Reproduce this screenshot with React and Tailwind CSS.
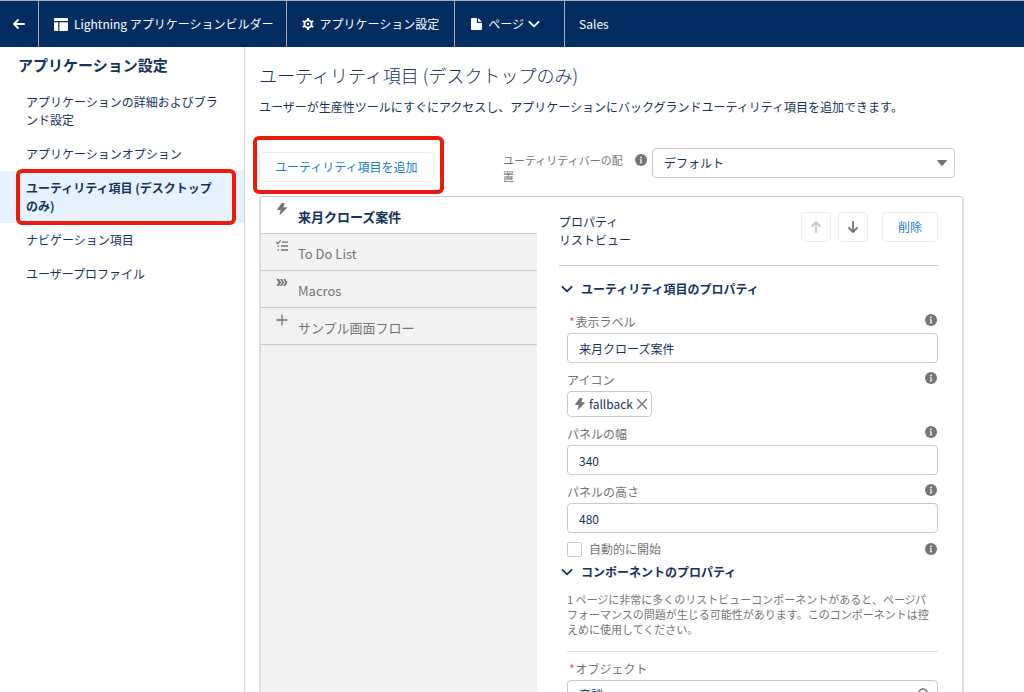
import { useState } from 'react';

const NAV_ITEMS = [
  'アプリケーションの詳細およびブランド設定',
  'アプリケーションオプション',
  'ユーティリティ項目 (デスクトップのみ)',
  'ナビゲーション項目',
  'ユーザープロファイル',
];

const TABS = [
  { label: '来月クローズ案件', Icon: BoltIcon },
  { label: 'To Do List', Icon: TodoIcon },
  { label: 'Macros', Icon: MacrosIcon },
  { label: 'サンプル画面フロー', Icon: PlusIcon },
];

const inputClass = 'block h-[30px] w-full rounded border border-[#c9c9c9] bg-white px-[11px] text-xs text-[#16325c] outline-none focus:border-[#1b7bd8]';

function BoltIcon({ className = 'size-3' }) {
  return (
    <svg viewBox="0 0 12 12" className={className} fill="currentColor" aria-hidden="true">
      <path d="M5.6.2 1.2 6.3c-.3.4-.1.8.4.8h3.1L3.6 11.500c-.1.500.300.600.600.300l6.500-6.600c.400-.4.2-.9-.3-.9H7.300L8.500.8C8.600.3 8.400 0 8 0H6.100z" />
    </svg>
  );
}

function TodoIcon() {
  return (
    <svg viewBox="0 0 12 12" className="size-3" fill="none" stroke="currentColor" strokeWidth="1.3" aria-hidden="true">
      <path d="M0 2 1.8 3.6 4.8.4M6 2.2h6M5 6h7M5 10h7M1.6 6H3M1.6 10H3" />
    </svg>
  );
}

function MacrosIcon() {
  return (
    <svg viewBox="0 0 12 12" className="size-3" fill="currentColor" aria-hidden="true">
      <path d="M.4 2h2.600L5.200 5.500 3 9H.4l2.200-3.500zM4 2h2L8.200 5.500 6 9H4l2.200-3.500zM7.200 2h2l2.300 3.500L9.200 9h-2l2.200-3.500z" />
    </svg>
  );
}

function PlusIcon() {
  return (
    <svg viewBox="0 0 12 12" className="size-3" fill="none" stroke="currentColor" strokeWidth="1.4" aria-hidden="true">
      <path d="M6 .5v11M.5 6h11" />
    </svg>
  );
}

function CloseIcon() {
  return (
    <svg viewBox="0 0 12 12" className="size-3" fill="none" stroke="currentColor" strokeWidth="1.4" strokeLinecap="round" aria-hidden="true">
      <path d="m1.6 1.6 8.8 8.8M10.4 1.6l-8.8 8.8" />
    </svg>
  );
}

function ArrowIcon({ className }) {
  return (
    <svg viewBox="0 0 12 12" className={className} fill="none" stroke="currentColor" strokeWidth="1.8" strokeLinecap="round" strokeLinejoin="round" aria-hidden="true">
      <path d="M6 11.2V1M2 5l4-4 4 4" />
    </svg>
  );
}

function ChevronIcon() {
  return (
    <svg viewBox="0 0 12 12" className="size-3 shrink-0" fill="none" stroke="currentColor" strokeWidth="1.8" strokeLinecap="round" strokeLinejoin="round" aria-hidden="true">
      <path d="m1.4 3.8 4.6 4.6 4.6-4.6" />
    </svg>
  );
}

function InfoIcon() {
  return (
    <svg viewBox="0 0 12 12" className="size-3" aria-hidden="true">
      <circle cx="6" cy="6" r="6" fill="#747474" />
      <circle cx="6" cy="3.4" r=".9" fill="#fff" />
      <path d="M4.8 5.2h1.8v3.2h.7v.8H4.7v-.8h.7V6h-.6z" fill="#fff" />
    </svg>
  );
}

function HelpButton() {
  return (
    <button type="button" aria-label="ヘルプ" className="block size-3 shrink-0">
      <InfoIcon />
    </button>
  );
}

function FieldLabel({ htmlFor, required, help = true, children }) {
  return (
    <div className="flex h-[21px] items-start justify-between pr-px">
      <label htmlFor={htmlFor} className="leading-5 text-[#747474]">
        {required && <span className="pr-px pl-0.5 text-[#e8585c]">*</span>}
        {children}
      </label>
      {help && <span className="pt-0.5"><HelpButton /></span>}
    </div>
  );
}

function SectionHeading({ children }) {
  return (
    <h3>
      <button type="button" className="flex items-center gap-2 text-xs leading-5 font-bold text-[#16325c]">
        <ChevronIcon />
        {children}
      </button>
    </h3>
  );
}

function SelectBox({ id, options, search }) {
  return (
    <div className="relative">
      <select id={id} className={`${inputClass} appearance-none`}>
        {options.map((option) => <option key={option}>{option}</option>)}
      </select>
      {search ? (
        <svg viewBox="0 0 12 12" className="pointer-events-none absolute top-2 right-2 size-3" fill="none" stroke="#747474" strokeWidth="1.6" aria-hidden="true">
          <path d="M8 8l3.5 3.5M9 5a4 4 0 1 1-8 0 4 4 0 0 1 8 0z" />
        </svg>
      ) : (
        <svg viewBox="0 0 10 6" className="pointer-events-none absolute top-3 right-2 h-1.5 w-2.5" fill="#747474" aria-hidden="true">
          <path d="M.5 0h9q.6.2.3.7L5.5 5.7q-.5.5-1 0L.2.7Q-.1.2.5 0z" />
        </svg>
      )}
    </div>
  );
}

function Header() {
  return (
    <header className="flex h-[47px] shrink-0 items-stretch border-t border-[#a3adbf] bg-[#032d60] text-xs text-white">
      <a href="#back" aria-label="戻る" className="flex w-[39px] items-center justify-center border-r border-[#a3adbf]">
        <ArrowIcon className="size-3 -rotate-90" />
      </a>
      <div className="flex items-center gap-1.5 border-r border-[#a3adbf] pr-3 pl-[15px]">
        <svg viewBox="0 0 14 13" className="h-[13px] w-3.5" fill="currentColor" aria-hidden="true">
          <path d="M1 0h12q1 0 1 1v2H0V1q0-1 1-1zM0 4.2h4.2V13H1q-1 0-1-1zM5.4 4.2H14V12q0 1-1 1H5.4z" />
        </svg>
        Lightning アプリケーションビルダー
      </div>
      <a href="#settings" className="flex items-center gap-1.5 border-r border-[#a3adbf] px-[15px]">
        <svg viewBox="0 0 12 12" className="size-3" fill="none" stroke="currentColor" aria-hidden="true">
          <circle cx="6" cy="6" r="3.6" strokeWidth="1.8" />
          <circle cx="6" cy="6" r="1.2" fill="currentColor" stroke="none" />
          <path strokeWidth="2" d="M6 0v2M6 10v2M.8 3l1.8 1M9.4 8l1.8 1M.8 9l1.8-1M9.4 4l1.8-1" />
        </svg>
        アプリケーション設定
      </a>
      <button type="button" className="flex items-center gap-1.5 border-r border-[#a3adbf] pr-6 pl-4">
        <svg viewBox="0 0 11 12" className="h-3 w-[11px]" fill="currentColor" aria-hidden="true">
          <path d="M1 0h4.8v4q0 1 1 1H11v6q0 1-1 1H1q-1 0-1-1V1q0-1 1-1zM7 0l4 3.8H7z" />
        </svg>
        <span className="flex items-center gap-1">
          ページ
          <ChevronIcon />
        </span>
      </button>
      <div className="flex items-center px-3.5">Sales</div>
    </header>
  );
}

function Sidebar({ current, onSelect }) {
  return (
    <nav className="w-[245px] shrink-0 border-r border-[#d4d4d4] pt-2">
      <h2 className="px-[18px] pb-[10px] text-[15px] leading-5 font-bold">アプリケーション設定</h2>
      <ul>
        {NAV_ITEMS.map((item, index) => (
          <li key={item} className="relative">
            <a
              href={`#item-${index}`}
              onClick={() => onSelect(index)}
              className={`block py-2 pr-6 pl-[26px] leading-[18px] ${index === current ? 'bg-[#e5f2fd] font-bold' : ''}`}
            >
              {item}
            </a>
            {index === 2 && (
              <span className="pointer-events-none absolute -inset-y-0.5 right-2 left-4 rounded-md border-4 border-[#ea1b0c]" />
            )}
          </li>
        ))}
      </ul>
    </nav>
  );
}

function TabList({ current, onSelect }) {
  return (
    <div role="tablist" className="w-[276px] shrink-0 bg-[#f3f2f2]">
      {TABS.map(({ label, Icon }, index) => (
        <button
          key={label}
          type="button"
          role="tab"
          aria-selected={index === current}
          onClick={() => onSelect(index)}
          className={`flex h-[37px] w-full items-start gap-[10px] border-b border-[#c9c9c9] pt-1.5 pl-[15px] text-[13px] ${index === current ? 'bg-white font-bold text-[#16325c]' : 'text-[#747474]'}`}
        >
          <span className="text-[#747474]"><Icon /></span>
          <span className="pt-1 leading-5">{label}</span>
        </button>
      ))}
    </div>
  );
}

function Properties() {
  const [label, setLabel] = useState('来月クローズ案件');
  const [width, setWidth] = useState('340');
  const [height, setHeight] = useState('480');
  const [autoStart, setAutoStart] = useState(false);

  return (
    <section className="min-w-0 flex-1 pr-6 pl-[22px]">
      <div className="flex h-[69px] items-start gap-[7px] border-b border-[#c9c9c9] pt-[15px]">
        <h2 className="flex-1 pt-px leading-[18px]">
          プロパティ
          <br />
          リストビュー
        </h2>
        <button type="button" disabled aria-label="上へ移動" className="flex size-[30px] items-center justify-center rounded border border-[#ececec] text-[#c9c9c9]">
          <ArrowIcon className="size-3" />
        </button>
        <button type="button" aria-label="下へ移動" className="flex size-[30px] items-center justify-center rounded border border-[#ececec] text-[#747474]">
          <ArrowIcon className="size-3 rotate-180" />
        </button>
        <button type="button" className="ml-[7px] h-[30px] rounded border border-[#ececec] px-[15px] text-[#1b7bd8]">削除</button>
      </div>

      <div className="pt-[13px] pl-0.5">
        <SectionHeading>ユーティリティ項目のプロパティ</SectionHeading>
      </div>
      <div className="pt-[13px] pl-2">
        <FieldLabel htmlFor="label" required>表示ラベル</FieldLabel>
        <input id="label" className={inputClass} value={label} onChange={(e) => setLabel(e.target.value)} />
      </div>
      <div className="pt-[7px] pl-2">
        <FieldLabel>アイコン</FieldLabel>
        <div className="inline-flex h-[26px] items-center gap-[3px] rounded border border-[#c9c9c9] px-[3px] pl-1.5 align-top">
          <BoltIcon className="size-3 text-[#747474]" />
          fallback
          <button type="button" aria-label="削除" className="text-[#747474]">
            <CloseIcon />
          </button>
        </div>
      </div>
      <div className="pt-[7px] pl-2">
        <FieldLabel htmlFor="width">パネルの幅</FieldLabel>
        <input id="width" className={inputClass} value={width} onChange={(e) => setWidth(e.target.value)} />
      </div>
      <div className="pt-[7px] pl-2">
        <FieldLabel htmlFor="height">パネルの高さ</FieldLabel>
        <input id="height" className={inputClass} value={height} onChange={(e) => setHeight(e.target.value)} />
      </div>
      <div className="flex items-center gap-[7px] pt-[5px] pr-px pl-2">
        <input
          id="auto-start"
          type="checkbox"
          className="size-[15px] appearance-none rounded-xs border border-[#c9c9c9] bg-white checked:bg-[#1b7bd8]"
          checked={autoStart}
          onChange={(e) => setAutoStart(e.target.checked)}
        />
        <label htmlFor="auto-start" className="flex-1 leading-[22px] text-[#747474]">自動的に開始</label>
        <HelpButton />
      </div>

      <div className="pt-0.5 pl-0.5">
        <SectionHeading>コンポーネントのプロパティ</SectionHeading>
      </div>
      <div className="pt-[10px] pl-2">
        <div className="border-b border-[#dddddd] pr-1.5 pb-3.5">
          <p className="text-[11px] leading-[15px] text-[#747474]">
            1 ページに非常に多くのリストビューコンポーネントがあると、ページパフォーマンスの問題が生じる可能性があります。このコンポーネントは控えめに使用してください。
          </p>
        </div>
      </div>
      <div className="pt-[7px] pl-2">
        <FieldLabel htmlFor="object" required help={false}>オブジェクト</FieldLabel>
        <SelectBox id="object" options={['商談']} search />
      </div>
    </section>
  );
}

function App() {
  const [navItem, setNavItem] = useState(2);
  const [tab, setTab] = useState(0);

  return (
    <div className="flex h-screen flex-col overflow-hidden bg-white font-['Noto_Sans_CJK_JP',sans-serif] text-xs text-[#16325c]">
      <Header />
      <div className="flex min-h-0 flex-1">
        <Sidebar current={navItem} onSelect={setNavItem} />
        <main className="flex min-w-0 flex-1 flex-col overflow-hidden pt-[15px] pr-[60px] pl-3.5">
          <h1 className="text-lg leading-[26px] font-light">ユーティリティ項目 (デスクトップのみ)</h1>
          <p className="pt-[9px] leading-5">ユーザーが生産性ツールにすぐにアクセスし、アプリケーションにバックグランドユーティリティ項目を追加できます。</p>
          <div className="flex items-start justify-between pt-[31px] pr-[9px] pb-3">
            <div className="relative pt-1">
              <button type="button" className="h-[30px] rounded border border-[#ececec] px-[15px] text-[#1b7bd8]">
                ユーティリティ項目を追加
              </button>
              <span className="pointer-events-none absolute -inset-y-3 -right-[10px] -left-1.5 rounded-md border-4 border-[#ea1b0c]" />
            </div>
            <div className="flex items-start">
              <label htmlFor="alignment" className="w-[132px] pt-1 pr-2 text-[11px] leading-4 text-[#747474]">ユーティリティバーの配置</label>
              <span className="pt-1.5 pr-[5px]"><HelpButton /></span>
              <div className="w-[303px]">
                <SelectBox id="alignment" options={['デフォルト']} />
              </div>
            </div>
          </div>
          <div className="flex min-h-0 flex-1 rounded-t border-x-2 border-t border-x-[#dddddd] border-t-[#c9c9c9]">
            <TabList current={tab} onSelect={setTab} />
            <Properties />
          </div>
        </main>
      </div>
    </div>
  );
}

export default App;
